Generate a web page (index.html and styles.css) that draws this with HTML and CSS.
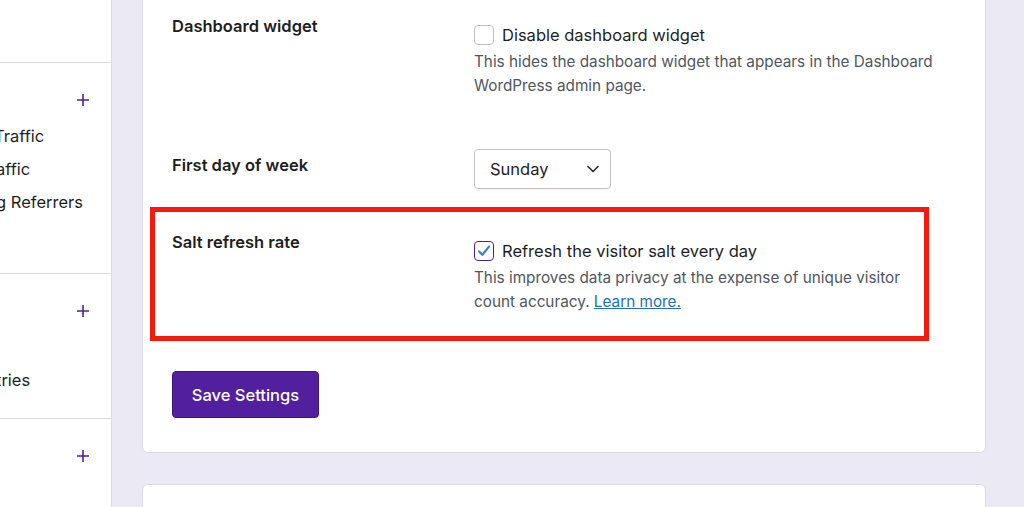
FILE: index.html
```html
<!DOCTYPE html>
<html lang="en">
<head>
<meta charset="utf-8">
<title>Settings</title>
<link rel="stylesheet" href="styles.css">
</head>
<body>
<div class="page">
  <aside class="sidebar">
    <div class="side-top"></div>
    <section class="side-section">
      <div class="side-head"><svg class="plus" viewBox="0 0 12 12" width="12" height="12"><path d="M6 0v12M0 6h12" stroke="#4b1fa0" stroke-width="1.6"/></svg></div>
      <ul class="side-list">
        <li class="side-item shift-1">Traffic</li>
        <li class="side-item shift-2">affic</li>
        <li class="side-item shift-2">g Referrers</li>
        <li class="side-item"></li>
      </ul>
    </section>
    <section class="side-section">
      <div class="side-head"><svg class="plus" viewBox="0 0 12 12" width="12" height="12"><path d="M6 0v12M0 6h12" stroke="#4b1fa0" stroke-width="1.6"/></svg></div>
      <ul class="side-list">
        <li class="side-item"></li>
        <li class="side-item shift-3">tries</li>
      </ul>
    </section>
    <section class="side-section">
      <div class="side-head"><svg class="plus" viewBox="0 0 12 12" width="12" height="12"><path d="M6 0v12M0 6h12" stroke="#4b1fa0" stroke-width="1.6"/></svg></div>
    </section>
  </aside>

  <main class="main">
    <div class="card">
      <div class="row row-check">
        <div class="row-label">Dashboard widget</div>
        <div class="row-control">
          <label class="check-line"><span class="checkbox"></span><span>Disable dashboard widget</span></label>
          <p class="desc">This hides the dashboard widget that appears in the Dashboard<br>WordPress admin page.</p>
        </div>
      </div>

      <div class="row row-select">
        <div class="row-label">First day of week</div>
        <div class="row-control">
          <div class="select"><span>Sunday</span><svg viewBox="0 0 12 8" width="12" height="8"><path d="M1 1.5l5 5 5-5" fill="none" stroke="#2c2c2c" stroke-width="1.7" stroke-linecap="round" stroke-linejoin="round"/></svg></div>
        </div>
      </div>

      <div class="highlight">
        <div class="row row-check">
          <div class="row-label">Salt refresh rate</div>
          <div class="row-control">
            <label class="check-line"><span class="checkbox checked"><svg viewBox="0 0 20 20" width="20" height="20"><path d="M5.2 10.4l3.2 3.4 6.6-8.2" fill="none" stroke="#3582c4" stroke-width="2.2" stroke-linecap="round" stroke-linejoin="round"/></svg></span><span>Refresh the visitor salt every day</span></label>
            <p class="desc">This improves data privacy at the expense of unique visitor<br>count accuracy. <a href="#" class="link">Learn more.</a></p>
          </div>
        </div>
      </div>

      <button class="btn" type="button">Save Settings</button>
    </div>
    <div class="card card-next"></div>
  </main>
</div>
</body>
</html>
```

FILE: styles.css
```css
* { box-sizing: border-box; }
html, body { margin: 0; padding: 0; }
body {
  background: #ebe9f3;
  font-family: Inter, "Noto Sans", "Liberation Sans", sans-serif;
  color: #1e1e1e;
  overflow: hidden;
  height: 507px;
}
.page {
  display: flex;
  margin-top: -30px;
  height: 537px;
  overflow: hidden;
}

/* sidebar */
.sidebar {
  width: 112px;
  flex: none;
  background: #fff;
  border-right: 1px solid #dcdae6;
  overflow: hidden;
}
.side-top { height: 92px; }
.side-section {
  border-top: 1px solid #dcdae6;
  padding: 25px 0 21px;
}
.side-head {
  height: 24px;
  display: flex;
  align-items: center;
  justify-content: flex-end;
  padding-right: 22px;
  margin-bottom: 8px;
}
.plus { display: block; }
.side-list { list-style: none; margin: 0; padding: 0; }
.side-item {
  height: 33px;
  line-height: 33px;
  font-size: 16.5px;
  white-space: nowrap;
  color: #1e1e1e;
}
.shift-1 { margin-left: -6px; }
.shift-2 { margin-left: -4px; }
.shift-3 { margin-left: -4px; }

/* main */
.main {
  flex: 1;
  padding: 0 38px 0 30px;
  display: flex;
  flex-direction: column;
  gap: 31px;
}
.card {
  background: #fff;
  border: 1px solid #dcdae6;
  border-radius: 6px;
  padding: 43px 29px 34px;
}
.card-next { height: 80px; padding: 0; flex: none; }

.row {
  display: grid;
  grid-template-columns: 302px 1fr;
}
.row-label {
  font-size: 16.5px;
  font-weight: 600;
  line-height: 24px;
  color: #1e1e1e;
}
.row-check .row-control { padding-top: 9px; }
.row-select { margin-top: 51px; }
.row-select .row-label { padding-top: 4px; }

.check-line {
  display: flex;
  align-items: center;
  gap: 8px;
  font-size: 16.5px;
  line-height: 24px;
  color: #1e1e1e;
}
.checkbox {
  width: 20px;
  height: 20px;
  border: 1px solid #bfbfc5;
  border-radius: 4px;
  background: #fff;
  flex: none;
  display: flex;
}
.checkbox.checked {
  border: 1.5px solid #4b1fa0;
}
.checkbox svg { display: block; margin: -1.5px; }
.desc {
  margin: 3px 0 0;
  font-size: 15.3px;
  line-height: 24px;
  color: #50575e;
}
.link { color: #2271b1; text-decoration: underline; }

.select {
  width: 137px;
  height: 40px;
  border: 1px solid #c3c4c7;
  border-radius: 4px;
  box-shadow: 0 1px 2px rgba(0,0,0,0.06);
  display: flex;
  align-items: center;
  justify-content: space-between;
  padding: 0 11px 0 15px;
  font-size: 16.5px;
  color: #1e1e1e;
}
.select svg { display: block; }

.highlight {
  margin: 18px 27px 0 -22px;
  border: 5px solid #f41b0e;
  padding: 18px 17px 22px;
}

.btn {
  margin-top: 30px;
  width: 147px;
  height: 47px;
  background: #52209f;
  border: 1px solid #3f1585;
  border-radius: 4px;
  color: #fff;
  font-family: inherit;
  font-size: 16.5px;
  font-weight: 500;
  display: block;
}
```
